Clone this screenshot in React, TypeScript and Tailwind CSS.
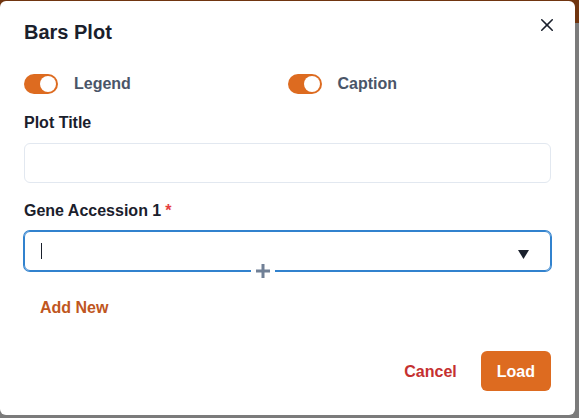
import React from "react";

function Switch() {
  return (
    <div className="w-[34px] h-5 rounded-full bg-[#dd6b20] p-[2px] flex justify-end shrink-0">
      <div className="w-4 h-4 rounded-full bg-white" />
    </div>
  );
}

export default function App() {
  return (
    <div
      className="relative w-[579px] h-[418px] overflow-hidden bg-[#7b7b7b] pt-px"
      style={{ fontFamily: '"Liberation Sans", Arial, sans-serif' }}
    >
      <div className="absolute left-0 top-0 w-full h-[23px] bg-[#703510]" />
      <div className="relative w-[575px] h-[414px] bg-white rounded-md flex flex-col">
        <button className="absolute top-2 right-3 w-8 h-8 flex items-center justify-center text-[#1a202c]">
          <svg width="12" height="12" viewBox="0 0 24 24" fill="currentColor">
            <path d="M.439,21.44a1.5,1.5,0,0,0,2.122,2.121L11.823,14.3a.25.25,0,0,1,.354,0l9.262,9.263a1.5,1.5,0,1,0,2.122-2.121L14.3,12.177a.25.25,0,0,1,0-.354l9.263-9.262A1.5,1.5,0,0,0,21.439.44L12.177,9.7a.25.25,0,0,1-.354,0L2.561.44A1.5,1.5,0,0,0,.439,2.561L9.7,11.823a.25.25,0,0,1,0,.354Z" />
          </svg>
        </button>
        <div className="pt-[17px] px-6 text-[20px] leading-[28px] font-bold text-[#1a202c]">
          Bars Plot
        </div>
        <div className="px-6 flex flex-col">
          <div className="mt-[26px] grid grid-cols-2 h-6">
            <div className="flex items-center gap-4">
              <Switch />
              <span className="text-[16px] leading-6 font-bold text-[#4a5568]">Legend</span>
            </div>
            <div className="flex items-center gap-4">
              <Switch />
              <span className="text-[16px] leading-6 font-bold text-[#4a5568]">Caption</span>
            </div>
          </div>
          <div className="mt-[15px] text-[16px] leading-6 font-bold text-[#1a202c]">Plot Title</div>
          <div className="mt-2 h-10 rounded-md border border-[#e2e8f0]" />
          <div className="mt-4 text-[16px] leading-6 font-bold text-[#1a202c]">
            Gene Accession 1<span className="ml-1 text-[#e53e3e]">*</span>
          </div>
          <div className="relative mt-2 h-10 rounded-md border border-[#3182ce] shadow-[0_0_0_1px_#3182ce] flex items-center">
            <div className="ml-4 w-px h-4 bg-[#1a202c]" />
            <svg className="absolute right-[21px] top-[18px]" width="11" height="9" viewBox="0 0 11 9">
              <polygon points="0,0 11,0 5.5,9" fill="#1a202c" />
            </svg>
            <div className="absolute left-[226px] bottom-[-8px] w-6 h-[14px] bg-white flex items-center justify-center">
              <svg width="14" height="14" viewBox="0 0 14 14">
                <rect x="0" y="5.5" width="14" height="3" fill="#718096" />
                <rect x="5.5" y="0" width="3" height="14" fill="#718096" />
              </svg>
            </div>
          </div>
          <div className="mt-[25px] pl-4 text-[16px] leading-6 font-bold text-[#c05621]">Add New</div>
          <div className="mt-[31px] flex justify-end items-center">
            <button className="h-10 px-4 pt-px text-[16px] font-bold text-[#c53030]">Cancel</button>
            <button className="ml-2 h-10 px-4 pt-px rounded-md bg-[#dd6b20] text-[16px] font-bold text-white">Load</button>
          </div>
        </div>
      </div>
    </div>
  );
}
